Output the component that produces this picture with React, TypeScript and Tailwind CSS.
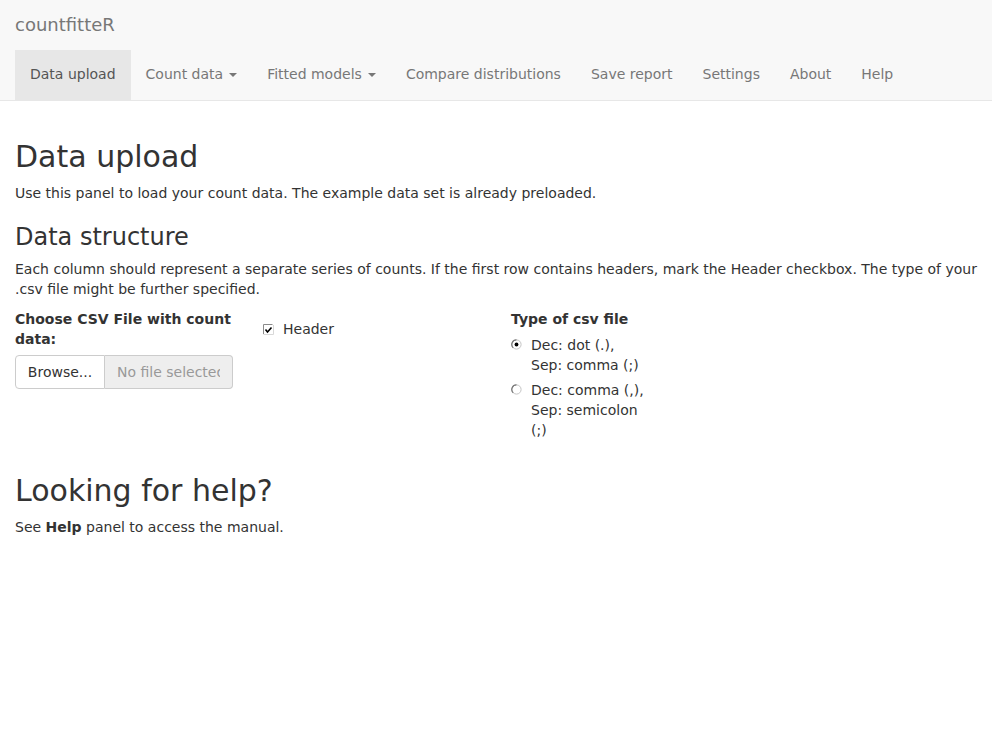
import { useState } from "react";

const tabs = [
  { label: "Data upload", active: true },
  { label: "Count data", caret: true },
  { label: "Fitted models", caret: true },
  { label: "Compare distributions" },
  { label: "Save report" },
  { label: "Settings" },
  { label: "About" },
  { label: "Help" },
];

function Caret() {
  return (
    <span className="ml-[6px] inline-block h-0 w-0 align-middle border-t-[4px] border-x-[4px] border-t-[#777] border-x-transparent" />
  );
}

function CheckIcon() {
  return (
    <svg width="11" height="11" viewBox="0 0 11 11" className="block">
      <path d="M0.5 10V0.5H9.5" fill="none" stroke="#8a8a8a" strokeWidth="1" />
      <path d="M0.5 10.5H10.5V1" fill="none" stroke="#d8d8d8" strokeWidth="1" />
      <path d="M2.5 5.5L4.5 8L8.5 3.5" fill="none" stroke="#000" strokeWidth="1.6" />
    </svg>
  );
}

function RadioIcon({ checked }: { checked?: boolean }) {
  return (
    <svg width="11" height="11" viewBox="0 0 11 11" className="block">
      <circle cx="5.5" cy="5.5" r="4.6" fill="#fff" stroke="#c4c4c4" strokeWidth="1" />
      <path d="M5.5 0.9A4.6 4.6 0 0 0 2.2 8.8" fill="none" stroke="#777" strokeWidth="1.2" />
      {checked && <circle cx="5.5" cy="5.5" r="1.9" fill="#000" />}
    </svg>
  );
}

export default function App() {
  const [header, setHeader] = useState(true);
  const [sep, setSep] = useState("dot");

  return (
    <div className="min-h-[744px] bg-white text-[14px] leading-[20px] text-[#333] font-['DejaVu_Sans',sans-serif]">
      <nav className="bg-[#f8f8f8] border-b border-[#e7e7e7]">
        <div className="px-[15px]">
          <div className="h-[50px] py-[15px] text-[18px] leading-[20px] text-[#777]">countfitteR</div>
          <ul className="flex">
            {tabs.map((t) => (
              <li key={t.label}>
                <a
                  className={`block px-[15px] pt-[14px] pb-[16px] leading-[20px] whitespace-nowrap ${
                    t.active ? "bg-[#e7e7e7] text-[#555]" : "text-[#777]"
                  }`}
                >
                  {t.label}
                  {t.caret && <Caret />}
                </a>
              </li>
            ))}
          </ul>
        </div>
      </nav>

      <main className="px-[15px] pt-[39px]">
        <h1 className="text-[30px] leading-[1.1]">Data upload</h1>
        <p className="mt-[10px]">Use this panel to load your count data. The example data set is already preloaded.</p>

        <h3 className="mt-[21px] text-[24px] leading-[1.1]">Data structure</h3>
        <p className="mt-[9px]">
          Each column should represent a separate series of counts. If the first row contains headers, mark the Header
          checkbox. The type of your .csv file might be further specified.
        </p>

        <div className="mt-[10px] grid grid-cols-4 -mx-[15px]">
          <div className="px-[15px]">
            <label className="block font-bold mb-[6px]">Choose CSV File with count data:</label>
            <div className="flex h-[34px]">
              <span className="w-[90px] shrink-0 flex items-center justify-center bg-white border border-[#ccc] rounded-l-[4px]">
                Browse...
              </span>
              <span className="flex-1 min-w-0 overflow-hidden whitespace-nowrap pl-[12px] pr-[12px] flex items-center bg-[#eee] border border-l-0 border-[#ccc] rounded-r-[4px] text-[#999]">
                <span className="overflow-hidden">No file selected</span>
              </span>
            </div>
          </div>

          <div className="px-[15px]">
            <label className="flex items-center mt-[10px] cursor-pointer" onClick={() => setHeader(!header)}>
              <span className="w-[20px]">{header ? <CheckIcon /> : <span className="block w-[11px] h-[11px] border border-[#999]" />}</span>
              Header
            </label>
          </div>

          <div className="px-[15px]">
            <label className="block font-bold mb-[6px]">Type of csv file</label>
            <div className="flex flex-col gap-[5px]">
              <label className="flex cursor-pointer" onClick={() => setSep("dot")}>
                <span className="w-[20px] pt-[4px]">
                  <RadioIcon checked={sep === "dot"} />
                </span>
                <span>
                  <span className="block">Dec: dot (.),</span>
                  <span className="block">Sep: comma (;)</span>
                </span>
              </label>
              <label className="flex cursor-pointer" onClick={() => setSep("comma")}>
                <span className="w-[20px] pt-[4px]">
                  <RadioIcon checked={sep === "comma"} />
                </span>
                <span>
                  <span className="block">Dec: comma (,),</span>
                  <span className="block">Sep: semicolon</span>
                  <span className="block">(;)</span>
                </span>
              </label>
            </div>
          </div>
        </div>

        <h1 className="mt-[34px] text-[30px] leading-[1.1]">Looking for help?</h1>
        <p className="mt-[10px]">
          See <b>Help</b> panel to access the manual.
        </p>
      </main>
    </div>
  );
}
